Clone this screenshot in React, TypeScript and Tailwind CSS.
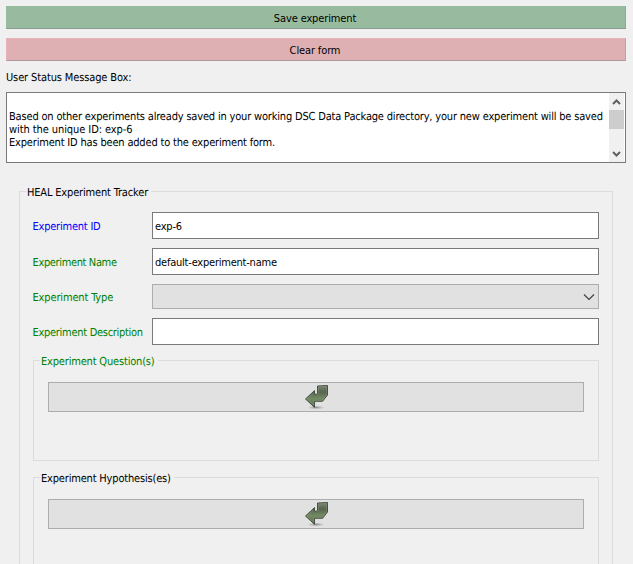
import type { ReactNode } from "react";

function ReturnArrow() {
  return (
    <svg width="24" height="26" viewBox="0 0 24 26" className="block overflow-visible">
      <defs>
        <linearGradient id="leaf" x1="0" y1="0" x2="0" y2="1">
          <stop offset="0" stopColor="#7b8775" />
          <stop offset="0.3" stopColor="#56644e" />
          <stop offset="0.6" stopColor="#728a63" />
          <stop offset="1" stopColor="#566b4c" />
        </linearGradient>
        <radialGradient id="shade">
          <stop offset="0" stopColor="#666" stopOpacity="0.7" />
          <stop offset="1" stopColor="#999" stopOpacity="0" />
        </radialGradient>
      </defs>
      <ellipse cx="12" cy="23.5" rx="9" ry="2.2" fill="url(#shade)" />
      <path
        d="M13.5 2 L23.5 1.5 V11 L18.6 17.3 H10.5 V23.3 L1.5 15 L10.5 6.6 V10.2 H12.3 L13.5 9.2 Z"
        fill="url(#leaf)"
        stroke="#3a4435"
        strokeWidth="0.9"
        strokeLinejoin="round"
      />
      <path d="M14.4 10 V2.9 L22.6 2.5 V10.7 L18.2 16.4 H9.6 V21 L3 15 L9.6 8.8" fill="none" stroke="#a0b193" strokeWidth="0.6" opacity="0.45" />
    </svg>
  );
}

function Row({ label, color, gap, children }: { label: string; color: string; gap: string; children: ReactNode }) {
  return (
    <div className={`flex items-center ${gap}`}>
      <div className={`w-[120px] shrink-0 pt-[2px] pl-[0.5px] whitespace-nowrap ${color}`}>{label}</div>
      {children}
    </div>
  );
}

const field = "h-[27px] w-[447px] border border-[#7a7a7a] bg-white px-[2px] pt-[2px] tracking-[-0.22px] text-black outline-none";

function ListGroup({ title, color, className }: { title: string; color: string; className: string }) {
  return (
    <section className={`flex w-[566px] flex-col border border-[#dcdcdc] ${className}`}>
      <h2 className={`-mt-[7px] ml-[6px] h-[14px] self-start bg-[#f0f0f0] pt-px pr-[3px] pl-[1px] leading-[14px] tracking-[-0.18px] whitespace-nowrap ${color}`}>
        {title}
      </h2>
      <button className="mt-[14px] ml-[14px] flex h-[30px] w-[536px] shrink-0 items-center justify-center border border-[#adadad] bg-[#e1e1e1]">
        <ReturnArrow />
      </button>
    </section>
  );
}

export default function App() {
  return (
    <main className="flex h-[564px] w-[633px] flex-col overflow-hidden bg-[#f0f0f0] px-[6px] pt-[6px] font-['DejaVu_Sans_Condensed','DejaVu_Sans',sans-serif] text-[11px] leading-[13px] tracking-[-0.13px] text-black [text-rendering:geometricPrecision]">
      <button className="h-[23px] w-[620px] shrink-0 border border-t-[#93bf9f] border-r-[#8ea996] border-b-[#8b9b8f] border-l-[#93bf9f] bg-[#98bb9f] pt-[2px] pr-[2px]">
        Save experiment
      </button>
      <button className="mt-[9px] h-[23px] w-[620px] shrink-0 border border-t-[#e8b3b8] border-r-[#c0a0a3] border-b-[#b09799] border-l-[#e8b3b8] bg-[#dfb0b3] pt-[2px] pr-[2px]">
        Clear form
      </button>
      <div className="mt-[10px] h-[13px] shrink-0">User Status Message Box:</div>
      <div className="mt-[8px] flex h-[71px] w-[620px] shrink-0 border border-[#7a7a7a] bg-white pr-px">
        <div className="w-[602px] pt-[17px] pl-[2px] tracking-[-0.18px] whitespace-nowrap">
          <p>Based on other experiments already saved in your working DSC Data Package directory, your new experiment will be saved</p>
          <p className="tracking-[-0.08px]">with the unique ID: exp-6</p>
          <p>Experiment ID has been added to the experiment form.</p>
        </div>
        <div className="flex w-[15px] flex-col bg-[#f0f0f0]">
          <svg width="15" height="17" viewBox="0 0 15 17" fill="none" stroke="#606060" strokeWidth="2">
            <path d="M4 11 L7.5 7.5 L11 11" />
          </svg>
          <div className="h-[19px] bg-[#cdcdcd]" />
          <svg width="15" height="17" viewBox="0 0 15 17" fill="none" stroke="#606060" strokeWidth="2" className="mt-auto">
            <path d="M4 7 L7.5 10.5 L11 7" />
          </svg>
        </div>
      </div>
      <section className="mt-[28px] ml-[13px] flex h-[500px] w-[594px] shrink-0 flex-col border border-[#dcdcdc]">
        <h1 className="-mt-[7px] ml-[6px] h-[14px] self-start bg-[#f0f0f0] pt-px pr-[3px] pl-[1px] leading-[14px] tracking-[-0.17px] whitespace-nowrap">
          HEAL Experiment Tracker
        </h1>
        <form className="flex flex-col pt-[13px] pl-[12px]">
          <Row label="Experiment ID" color="tracking-[-0.22px] text-[#0000ff]" gap="">
            <input className={field} defaultValue="exp-6" />
          </Row>
          <Row label="Experiment Name" color="tracking-[-0.36px] text-[#008000]" gap="mt-[9px]">
            <input className={field} defaultValue="default-experiment-name" />
          </Row>
          <Row label="Experiment Type" color="tracking-[-0.15px] text-[#008000]" gap="mt-[9px]">
            <div className="flex h-[25px] w-[447px] items-center justify-end border border-[#adadad] bg-[#e1e1e1] pr-[3px]">
              <svg width="12" height="8" viewBox="0 0 12 8" fill="none" stroke="#404040" strokeWidth="1.2">
                <path d="M1 1.5 L6 6.5 L11 1.5" />
              </svg>
            </div>
          </Row>
          <Row label="Experiment Description" color="tracking-[-0.29px] text-[#008000]" gap="mt-[9px]">
            <input className={field} />
          </Row>
        </form>
        <ListGroup title="Experiment Question(s)" color="text-[#008000]" className="mt-[15px] ml-[13px] h-[101px] shrink-0" />
        <ListGroup title="Experiment Hypothesis(es)" color="text-black" className="mt-[16px] ml-[13px] h-[101px] shrink-0" />
      </section>
    </main>
  );
}
